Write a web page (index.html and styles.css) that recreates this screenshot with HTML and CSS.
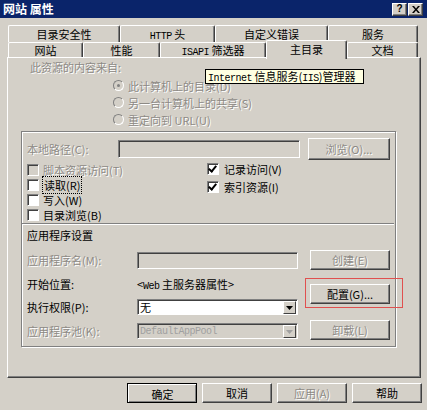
FILE: index.html
```html
<!DOCTYPE html>
<html lang="zh-CN">
<head>
<meta charset="utf-8">
<title>网站 属性</title>
<link rel="stylesheet" href="styles.css">
</head>
<body>
<div class="window">
  <div class="titlebar">
    <span class="title">网站 属性</span>
    <div class="tbtns">
      <span class="tbtn">?</span>
      <span class="tbtn">
        <svg width="8" height="7" viewBox="0 0 8 7"><path d="M0 0h2l2 2.5L6 0h2L5 3.5 8 7H6L4 4.5 2 7H0l3-3.5z" fill="#000"/></svg>
      </span>
    </div>
  </div>

  <div class="tabs">
    <div class="tabrow back">
      <div class="tab t-sec">目录安全性</div>
      <div class="tab t-http"><span class="mono">HTTP</span> 头</div>
      <div class="tab t-err">自定义错误</div>
      <div class="tab t-svc">服务</div>
    </div>
    <div class="tabrow front">
      <div class="tab t-site">网站</div>
      <div class="tab t-perf">性能</div>
      <div class="tab t-isapi"><span class="mono">ISAPI</span> 筛选器</div>
      <div class="tab t-home selected">主目录</div>
      <div class="tab t-doc">文档</div>
    </div>
  </div>

  <div class="panel">
    <div class="tooltip"><span class="mono">Internet</span> 信息服务(<span class="mono">IIS</span>)管理器</div>

    <div class="source dis">此资源的内容来自:</div>
    <div class="radios">
      <div class="radio-row dis"><span class="radio on"></span>此计算机上的目录(D)</div>
      <div class="radio-row dis"><span class="radio"></span>另一台计算机上的共享(S)</div>
      <div class="radio-row dis"><span class="radio"></span>重定向到 URL(U)</div>
    </div>

    <div class="group">
      <div class="path-row">
        <span class="lbl-path dis">本地路径(C):</span>
        <span class="field dis-field path-field"></span>
        <span class="btn dis browse">浏览(O)...</span>
      </div>

      <div class="checks">
        <div class="check-col">
          <div class="check-row dis"><span class="cb disabled"></span>脚本资源访问(T)</div>
          <div class="check-row"><span class="cb"></span><span class="focus">读取(R)</span></div>
          <div class="check-row"><span class="cb"></span>写入(W)</div>
          <div class="check-row"><span class="cb"></span>目录浏览(B)</div>
        </div>
        <div class="check-col right">
          <div class="check-row"><span class="cb checked"></span>记录访问(V)</div>
          <div class="check-row"><span class="cb checked"></span>索引资源(I)</div>
        </div>
      </div>

      <div class="divider"></div>
      <div class="app-title">应用程序设置</div>

      <div class="app">
        <div class="app-left">
          <div class="app-row r-a">
            <span class="lbl dis">应用程序名(M):</span>
            <span class="field dis-field app-field"></span>
          </div>
          <div class="app-row r-b">
            <span class="lbl">开始位置:</span>
            <span class="start">&lt;<span class="mono">Web</span> 主服务器属性&gt;</span>
          </div>
          <div class="app-row r-c">
            <span class="lbl">执行权限(P):</span>
            <span class="combo">
              <span class="combo-text">无</span>
              <span class="arrow"><svg width="7" height="4" viewBox="0 0 7 4"><path d="M0 0h7L3.5 4z" fill="#000"/></svg></span>
            </span>
          </div>
          <div class="app-row r-d">
            <span class="lbl dis">应用程序池(K):</span>
            <span class="combo disabled">
              <span class="combo-text mono">DefaultAppPool</span>
              <span class="arrow"><svg width="7" height="4" viewBox="0 0 7 4"><path d="M0 0h7L3.5 4z" fill="#a0a0a0"/></svg></span>
            </span>
          </div>
        </div>
        <div class="app-right">
          <span class="btn dis b-create">创建(E)</span>
          <span class="btn b-config">配置(G)...</span>
          <span class="btn dis b-unload">卸载(L)</span>
        </div>
      </div>
      <div class="highlight"></div>
    </div>
  </div>

  <div class="footer">
    <span class="btn default">确定</span>
    <span class="btn">取消</span>
    <span class="btn dis">应用(A)</span>
    <span class="btn">帮助</span>
  </div>
</div>
</body>
</html>
```
FILE: styles.css
```css
* { box-sizing: border-box; }
html, body { margin: 0; padding: 0; }
body {
  width: 427px;
  height: 410px;
  background: #d4d0c8;
  font-family: "Noto Sans CJK SC", "Noto Sans", sans-serif;
  font-size: 11px;
  color: #000;
  overflow: hidden;
}
.window { width: 427px; height: 410px; }
.mono { font-family: "Liberation Mono", "DejaVu Sans Mono", monospace; font-size: 10px; letter-spacing: -0.5px; }

.dis { color: #8d8a85; text-shadow: 1px 1px 0 #fff; }

/* title bar */
.titlebar {
  height: 18px;
  background: #0a246a;
  display: flex;
  align-items: center;
  justify-content: space-between;
  padding: 0 4px 0 3px;
}
.title { color: #fff; font-weight: bold; font-size: 12px; line-height: 18px; }
.tbtns { display: flex; gap: 1px; }
.tbtn {
  width: 15px; height: 13px;
  background: #d4d0c8;
  border-top: 1px solid #fff; border-left: 1px solid #fff;
  border-right: 1px solid #404040; border-bottom: 1px solid #404040;
  box-shadow: inset -1px -1px 0 #808080;
  display: flex; align-items: center; justify-content: center;
  font-family: "Liberation Sans", sans-serif; font-weight: bold; font-size: 10px; line-height: 1;
}

/* tabs */
.tabs { padding-top: 7px; padding-left: 8px; }
.tabrow { display: flex; }
.tabrow.back { height: 17px; }
.tabrow.front { height: 15px; }
.tab {
  background: #d4d0c8;
  border-top: 1px solid #fff;
  border-left: 1px solid #fff;
  border-right: 1px solid #404040;
  box-shadow: inset -1px 0 0 #808080;
  border-radius: 2px 2px 0 0;
  text-align: center;
  line-height: 15px;
  height: 100%;
}
.tabrow.back .tab { line-height: 16px; }
.t-sec { width: 112px; }
.t-http { width: 95px; }
.t-err { width: 113px; }
.t-svc { width: 90px; }
.t-site { width: 75px; }
.t-perf { width: 77px; }
.t-isapi { width: 106px; }
.t-home { width: 81px; }
.t-doc { width: 71px; }
.tab.selected {
  position: relative;
  z-index: 2;
  height: 19px;
  margin-top: -2px;
  line-height: 17px;
}

/* panel */
.panel {
  position: relative;
  margin-left: 7px;
  width: 414px;
  height: 321px;
  border-top: 1px solid #fff;
  border-left: 1px solid #fff;
  border-right: 1px solid #404040;
  border-bottom: 1px solid #404040;
  box-shadow: inset -1px -1px 0 #808080;
  padding: 2px 0 0 22px;
}
.tooltip {
  position: absolute;
  left: 197px; top: 11px;
  width: 159px; height: 15px;
  background: #ffffe1;
  border: 1px solid #000;
  line-height: 13px;
  padding-left: 2px;
  white-space: nowrap;
  z-index: 3;
}
.source { line-height: 14px; }
.radios { margin-top: 3px; padding-left: 83px; }
.radio-row { height: 17px; display: flex; align-items: center; gap: 4px; }
.radio {
  width: 11px; height: 11px; border-radius: 50%;
  background: #d4d0c8;
  border: 1px solid #808080;
  border-right-color: #fff; border-bottom-color: #fff;
  display: flex; align-items: center; justify-content: center;
  flex: none;
}
.radio.on::after { content: ""; width: 3px; height: 3px; border-radius: 50%; background: #808080; }

/* group */
.group {
  position: relative;
  margin-top: 3px;
  margin-left: -9px;
  width: 375px;
  height: 216px;
  border: 1px solid #808080;
  box-shadow: inset 1px 1px 0 #fff, 1px 1px 0 #fff;
  padding: 6px 0 0 5px;
}
.path-row { display: flex; align-items: center; height: 22px; }
.lbl-path { width: 91px; }
.field {
  height: 18px;
  border-top: 1px solid #808080; border-left: 1px solid #808080;
  border-right: 1px solid #fff; border-bottom: 1px solid #fff;
  box-shadow: inset 1px 1px 0 #404040;
  background: #fff;
}
.dis-field { background: #d4d0c8; }
.path-field { width: 182px; }
.btn {
  display: flex; align-items: center; justify-content: center;
  background: #d4d0c8;
  border-top: 1px solid #fff; border-left: 1px solid #fff;
  border-right: 1px solid #404040; border-bottom: 1px solid #404040;
  box-shadow: inset -1px -1px 0 #808080;
  white-space: nowrap;
}
.browse { width: 82px; height: 22px; margin-left: 8px; }

.checks { display: flex; margin-top: 2px; }
.check-col { width: 180px; }
.check-col.right { width: auto; }
.check-row { height: 15px; display: flex; align-items: center; gap: 4px; }
.check-col.right .check-row { gap: 5px; }
.check-col.right .check-row:first-child { margin-top: -1px; margin-bottom: 3px; }
.cb {
  width: 12px; height: 12px; flex: none;
  background: #fff;
  border-top: 1px solid #808080; border-left: 1px solid #808080;
  border-right: 1px solid #fff; border-bottom: 1px solid #fff;
  box-shadow: inset 1px 1px 0 #404040;
  position: relative;
}
.cb.disabled { background: #d4d0c8; }
.cb.checked::after {
  content: "";
  position: absolute;
  left: 2px; top: 0px;
  width: 3px; height: 6px;
  border-right: 2px solid #000; border-bottom: 2px solid #000;
  transform: rotate(40deg);
}
.focus { outline: 1px dotted #000; outline-offset: 0; padding: 0 1px; }

.divider {
  margin: 1px 0 0 -5px;
  width: 372px;
  border-top: 1px solid #808080;
  border-bottom: 1px solid #fff;
}
.app-title { line-height: 14px; margin-top: 3px; }

.app { display: flex; margin-top: 8px; }
.app-left { width: 271px; }
.app-row { display: flex; align-items: center; }
.lbl { width: 110px; flex: none; }
.r-a { height: 20px; }
.app-field { width: 161px; height: 17px; }
.r-b { height: 16px; margin-top: 6px; }
.r-c { height: 16px; margin-top: 7px; }
.r-d { height: 16px; margin-top: 8px; }
.combo {
  width: 161px; height: 16px;
  display: flex; align-items: stretch;
  background: #fff;
  border-top: 1px solid #808080; border-left: 1px solid #808080;
  border-right: 1px solid #fff; border-bottom: 1px solid #fff;
  box-shadow: inset 1px 1px 0 #404040;
  padding: 1px 1px 0 2px;
}
.combo.disabled { background: #d4d0c8; color: #a0a0a0; }
.combo-text { flex: 1; line-height: 13px; }
.arrow {
  width: 13px;
  background: #d4d0c8;
  border-top: 1px solid #fff; border-left: 1px solid #fff;
  border-right: 1px solid #404040; border-bottom: 1px solid #404040;
  display: flex; align-items: center; justify-content: center;
  margin-bottom: 0;
}
.app-right { margin-left: 12px; display: flex; flex-direction: column; }
.app-right .btn { width: 80px; height: 20px; }
.b-config { margin-top: 14px; }
.b-unload { margin-top: 16px; }
.highlight {
  position: absolute;
  left: 283px; top: 146px;
  width: 98px; height: 30px;
  border: 1px solid #e0504f;
}

/* footer */
.footer {
  display: flex; justify-content: flex-end; gap: 5px;
  padding: 5px 5px 0 0;
}
.footer .btn { width: 70px; height: 20px; }
.footer .btn.default { outline: 1px solid #000; outline-offset: -1px; border-width: 2px 1px 1px 2px; }
```
